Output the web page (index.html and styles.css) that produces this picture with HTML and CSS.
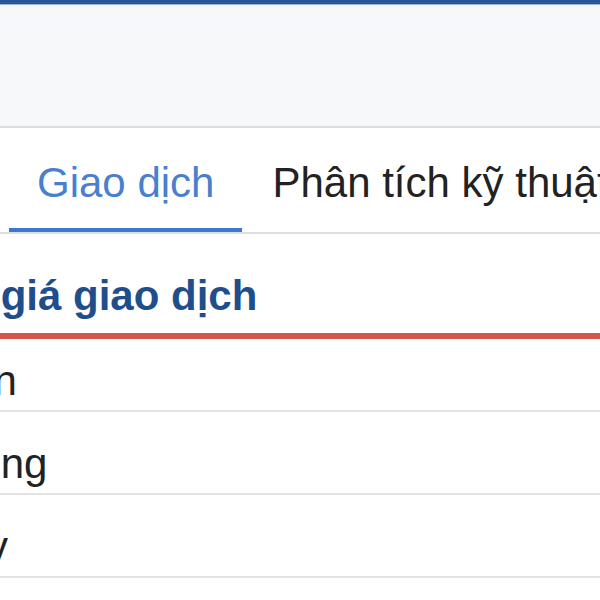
FILE: index.html
```html
<!DOCTYPE html>
<html lang="vi">
<head>
<meta charset="utf-8">
<link rel="stylesheet" href="styles.css">
</head>
<body>
<div class="page">
  <div class="topbar"></div>
  <div class="header"></div>
  <nav class="tabs">
    <div class="tab active">Giao dịch</div>
    <div class="tab">Phân tích kỹ thuật</div>
    <div class="tab">Tin tức</div>
  </nav>
  <section class="content">
    <h2 class="title">Bảng giá giao dịch</h2>
    <div class="row first">Thời gian</div>
    <div class="row">Khối lượng</div>
    <div class="row">Hôm nay</div>
  </section>
</div>
</body>
</html>
```
FILE: styles.css
```css
html, body {
  margin: 0;
  padding: 0;
  background: #fff;
}
.page {
  width: 600px;
  height: 600px;
  overflow: hidden;
  font-family: "Liberation Sans", Arial, sans-serif;
}
.topbar {
  height: 4px;
  background: #2a5598;
  border-bottom: 1px solid #9db3d6;
}
.header {
  height: 121px;
  background: #f7f8fa;
  border-bottom: 2px solid #dcdddf;
}
.tabs {
  display: flex;
  white-space: nowrap;
  padding-left: 9px;
  border-bottom: 2px solid #dedede;
  overflow: hidden;
}
.tab {
  font-size: 42px;
  line-height: 48px;
  color: #222;
  padding: 31px 28px 21px;
  border-bottom: 6px solid transparent;
  margin-bottom: -2px;
  flex: none;
}
.tab + .tab {
  padding-left: 30px;
}
.tab.active {
  color: #4a7fcf;
  border-bottom-color: #3b78d0;
}
.content {
  margin-left: -160px;
  white-space: nowrap;
}
.title {
  margin: 0;
  font-size: 42px;
  line-height: 48px;
  font-weight: bold;
  color: #1f4e8d;
  padding: 38px 0 13px 44px;
  border-bottom: 6px solid #d6554b;
}
.row {
  font-size: 42px;
  line-height: 48px;
  color: #222;
  padding: 28px 0 5px 0;
  border-bottom: 2px solid #e3e3e3;
}
.row.first {
  padding-top: 18px;
}
```
